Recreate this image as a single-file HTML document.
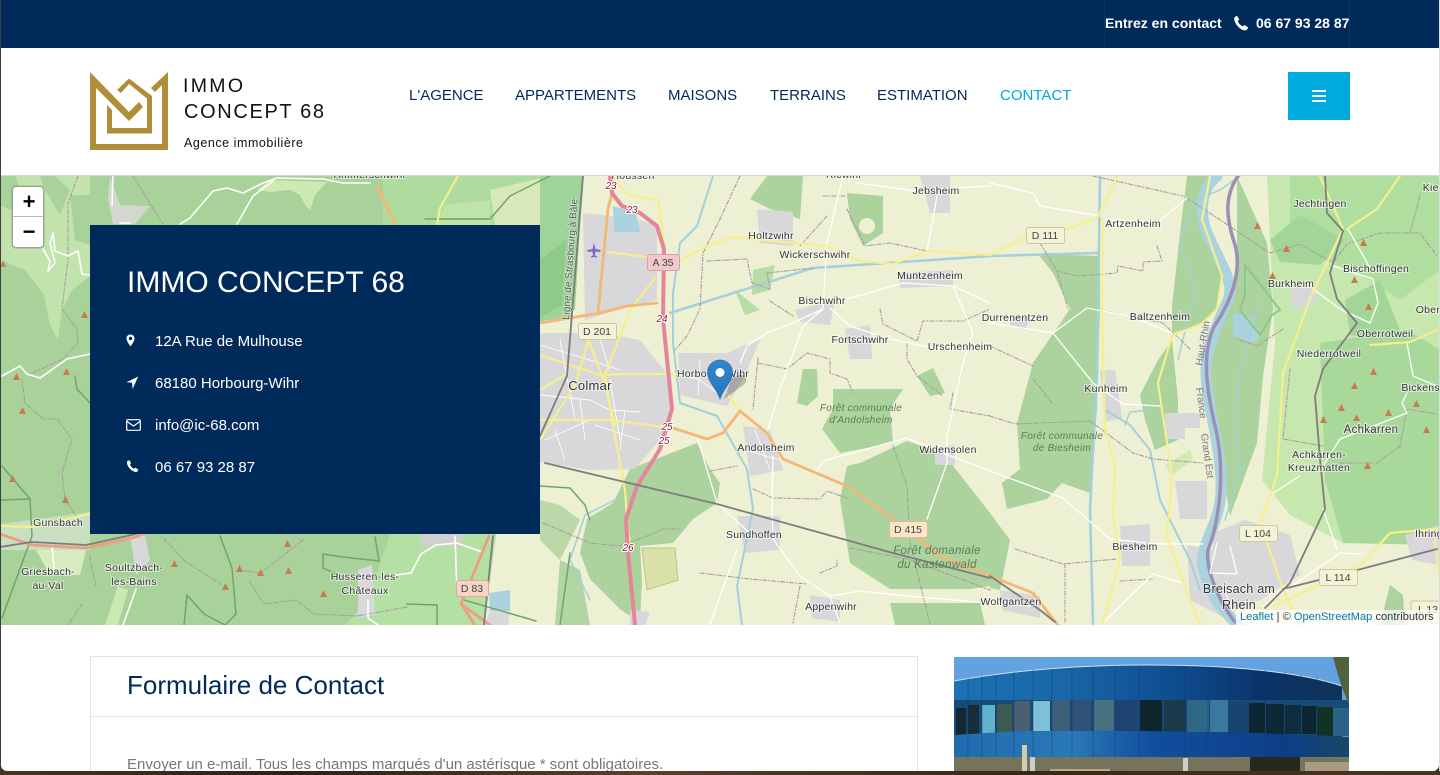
<!DOCTYPE html>
<html lang="fr"><head><meta charset="utf-8"><title>Contact</title>
<style>
html,body{margin:0;padding:0}
body{width:1440px;height:775px;overflow:hidden;position:relative;background:#3b2a1a;font-family:"Liberation Sans",Arial,sans-serif}
#page{position:absolute;left:1px;top:0;width:1438px;height:771px;background:#fff;border-radius:0 0 6px 6px;overflow:hidden}
.a{position:absolute;white-space:nowrap}
#left{position:absolute;left:0;top:0;width:1px;height:771px;background:#3a3f44}
#right{position:absolute;right:0;top:0;width:1px;height:771px;background:#d8dde0}
#bot{position:absolute;left:0;top:771px;width:1440px;height:4px;background:linear-gradient(90deg,#4a3420,#2e2014 20%,#5a4026 45%,#3a2818 70%,#4b3520)}
.nav{top:87px;font-size:15px;line-height:18px;color:#002a5a}
.det{font-size:15px;line-height:18px;color:#fff}
svg text{font-family:"Liberation Sans",sans-serif}
.l{font-size:10.5px;letter-spacing:.25px;fill:#333;text-anchor:middle;stroke:rgba(255,255,255,.6);stroke-width:2px;paint-order:stroke}
.f{font-size:10px;font-style:italic;letter-spacing:.3px;fill:#5c7d56;text-anchor:middle}
.s{font-size:10.5px;fill:#444;text-anchor:middle}
.r{font-size:10px;font-style:italic;fill:#8c1f3a;text-anchor:middle;stroke:#fff;stroke-width:2px;paint-order:stroke}
</style></head><body>
<div id="left"></div><div id="right"></div><div id="bot"></div>
<div id="page">
<div class="a" style="left:0;top:0;width:1438px;height:48px;background:#002a5a"></div>
<div class="a" style="left:1103px;top:0;width:1px;height:48px;background:#0a3566"></div>
<div class="a" style="left:1348px;top:0;width:1px;height:48px;background:#0a3566"></div>
<div class="a" style="left:1104px;top:15px;font-size:14px;line-height:17px;font-weight:bold;color:#fff">Entrez en contact</div>
<svg class="a" style="left:1232px;top:15px" width="16" height="16" viewBox="0 0 16 16"><path d="M1.500 2.200 4 .8 6.300 4.600 4.900 6C5.300 8 7.600 10.600 10 11.300L11.600 10 15.200 12.500 13.800 15C12.500 15.800 10 15.500 7.400 13.600 3.500 10.800 .2 5.600 1.500 2.200Z" fill="#fff"/></svg>
<div class="a" style="left:1255px;top:15px;font-size:14px;line-height:17px;font-weight:bold;color:#fff">06 67 93 28 87</div>
<svg class="a" style="left:-1px;top:48px" width="340" height="127" viewBox="0 48 340 127">
<path d="M90 72V150H168V72L151 88 155 92 162 85V144H96V88L129 121 143 107 139 102 129 112Z" fill="#b08d36"/>
<path d="M117 90 129 78.500 152 96V133.500H107V105L112 110V128H147V98.500L129 84 121 93Z" fill="#b08d36"/>
<text x="183" y="92" font-size="19.500" textLength="60" lengthAdjust="spacing" fill="#111">IMMO</text>
<text x="184" y="118" font-size="20" textLength="140" lengthAdjust="spacing" fill="#111">CONCEPT 68</text>
<text x="184" y="147" font-size="12.500" textLength="119" lengthAdjust="spacing" fill="#111">Agence immobilière</text>
</svg>
<div class="a nav" style="left:408px">L'AGENCE</div>
<div class="a nav" style="left:514px">APPARTEMENTS</div>
<div class="a nav" style="left:667px">MAISONS</div>
<div class="a nav" style="left:769px">TERRAINS</div>
<div class="a nav" style="left:876px">ESTIMATION</div>
<div class="a nav" style="left:999px;color:#00a9de">CONTACT</div>
<div class="a" style="left:1287px;top:72px;width:62px;height:48px;background:#00a9de"></div>
<div class="a" style="left:1311px;top:90px;width:14px;height:2px;background:#fff"></div>
<div class="a" style="left:1311px;top:95px;width:14px;height:2px;background:#fff"></div>
<div class="a" style="left:1311px;top:100px;width:14px;height:2px;background:#fff"></div>

<svg class="a" style="left:-1px;top:175px" width="1440" height="450" viewBox="0 175 1440 450">
<rect x="0" y="175" width="1440" height="450" fill="#eef0d3"/>
<!-- West base -->
<path d="M0 175H583L572 320H540V534H496L484 625H0Z" fill="#a8d29a"/>
<path d="M0 176H90V276L72 290 62 310 58 340 50 325 44 295 25 270 5 262 0 270Z" fill="#c2e3ab"/>
<path d="M40 176H55L70 190 60 215 45 190ZM0 176H15L25 200 10 210 0 205ZM70 195H90V245L75 240ZM90 176H108V225H95Z" fill="#a8d29a"/>
<path d="M110 176 120 205 150 206 135 224H113L108 200Z" fill="#d4d7cf"/>
<path d="M383 176H540V225H383Z" fill="#aedc9e"/>
<path d="M257 190 270 180 327 182 315 195 310 210 305 205 300 195 290 190 270 192Z" fill="#cfeab0"/>
<path d="M490 190 550 176V225H495Z" fill="#d8e8b8"/>
<path d="M445 205 490 200 490 225H435Z" fill="#c0e4a8"/>
<path d="M0 524 90 512V550H0Z" fill="#c8dfc0"/>
<path d="M36 550H86L80 575 50 575Z" fill="#d8ecc0"/>
<path d="M118 586 128 590 118 625H105Z" fill="#cbe8b0"/>
<path d="M390 534H496L484 625H345L368 600Z" fill="#b4e0a3"/>
<path d="M421 534H464L460 546 421 546Z" fill="#d0d0d0"/>
<path d="M540 176H583L575 310 540 322Z" fill="#9ed498"/>
<path d="M540 260 566 240 562 305 540 318Z" fill="#8ecb88"/>
<!-- East -->
<path d="M1267 176H1440V545L1343 543 1290 515 1262 480 1275 343Z" fill="#c6e8ae"/>
<path d="M1320 343 1407 330 1440 350V545L1343 543 1325 480Z" fill="#a8d89a"/>
<path d="M1290 176H1440V270L1400 300 1370 280 1330 262 1290 245Z" fill="#b0de9f"/>
<path d="M1270 240 1300 215 1345 240 1320 265 1280 262ZM1380 280 1400 330 1380 340 1350 335 1345 300Z" fill="#a4d598"/>
<path d="M1380 625 1390 585 1403 595 1405 625Z" fill="#acd29d"/>
<!-- Rhine forest -->
<path d="M1172 306 1180 233 1187 176H1210L1203 226 1222 273 1217 309 1197 326 1172 333Z" fill="#acd29d"/>
<path d="M1237 176 1267 243 1273 309 1263 376 1257 443 1230 516 1222 466 1207 393 1210 339 1237 276 1237 236Z" fill="#acd29d"/>
<path d="M1140 395 1158 360 1172 340 1178 400 1178 440 1155 450 1145 420Z" fill="#acd29d"/>
<!-- Central forests -->
<g fill="#acd29d">
<path d="M750 199 767 176H803L800 219 770 209Z"/>
<path d="M847 193 883 196 883 233 863 246 850 219Z"/>
<path d="M797 403 803 369 817 369 818 396 807 406Z"/>
<path d="M917 376 933 368 945 393 930 396Z"/>
<path d="M833 389 903 389 890 409 893 443 840 453 822 429 833 409Z"/>
<path d="M860 463 907 441 943 453 990 513V586L970 589 957 589 890 589 850 563 840 499 847 466Z"/>
<path d="M890 603 980 603 985 625H895Z"/>
<path d="M990 513 1010 540 1000 590 990 588Z"/>
<path d="M1038 254 1100 256 1100 309 1097 409 1090 493 1062 483 1047 499 1007 509 1002 483 1020 469 1017 423 1033 363 1070 309 1053 273Z"/>
<path d="M630 469 697 443 710 469 720 483 717 503 693 519 673 543 640 546 642 579 640 623 620 609 590 579 580 553 587 519 613 503Z"/>
<path d="M540 500 560 505 580 520 560 560 540 540Z" opacity=".8"/>
<path d="M560 560 580 570 590 625H555Z" opacity=".9"/>
</g>
<circle cx="867" cy="226" r="8" fill="#eef0d3"/>
<path d="M642 548 675 548 678 580 647 590Z" fill="#d9e0a8" stroke="#bcc58a"/>
<path d="M1165 465 1190 450 1193 460 1172 475Z" fill="#d0eab0"/>
<path d="M753 270 775 265 770 290 752 295ZM735 290 760 310 745 315Z" fill="#b8dca6"/>
<!-- Urban -->
<g fill="#d8d7d9">
<path d="M583 213 635 218 657 226 657 300 610 312 585 320Z"/>
<path d="M540 333H600L640 340 672 380 668 430 635 469 590 470 540 462Z"/>
<path d="M678 353 727 353 745 345 760 340 745 375 727 406 680 395Z"/>
<path d="M743 426 770 430 783 470 750 476Z"/>
<path d="M737 516 780 516 780 550 745 553Z"/>
<path d="M757 209 793 212 793 246 760 243Z"/>
<path d="M845 329 870 325 872 359 850 359Z"/>
<path d="M898 273 953 270 953 286 900 288Z"/>
<path d="M920 176 950 176 950 213 930 213Z"/>
<path d="M795 310 835 300 830 325 800 322Z"/>
<path d="M935 450 955 445 955 465 935 465Z"/>
<path d="M1120 526 1150 524 1150 566 1122 566Z"/>
<path d="M1100 370 1115 370 1122 418 1105 422Z"/>
<path d="M1213 533 1245 520 1290 535 1300 575 1260 600 1235 610 1213 570Z"/>
<path d="M1165 413H1200V428H1185V439H1165Z"/>
<path d="M1175 481H1207V519H1180Z"/>
<path d="M1290 285 1320 288 1315 305 1292 308Z"/>
<path d="M1405 535 1440 525V565L1412 560Z"/>
<path d="M1187 545 1215 550 1232 622 1190 600Z"/>
<path d="M1000 590 1040 596 1040 618 1002 610Z"/>
<path d="M1010 315 1030 318 1025 330 1010 325Z"/>
<path d="M810 595 840 600 840 622 812 618Z"/>
<path d="M490 611 510 612 508 625 484 625Z"/>
<path d="M358 570 372 565 375 615 358 618Z"/>
<path d="M130 535 145 535 150 560 136 575Z"/>
<path d="M630 610 650 612 645 625 630 625Z"/>
</g>
<g fill="none" stroke-linecap="round" stroke-linejoin="round">
<!-- Water -->
<path d="M1217 176C1200 190 1198 215 1210 240S1235 285 1228 300C1215 330 1205 350 1206 375 1208 410 1222 450 1221 490S1195 545 1205 575 1225 610 1237 625" stroke="#aad3df" stroke-width="11"/>
<path d="M613 206 636 213 640 232H614Z" fill="#aad3df" stroke="none"/>
<path d="M1233 313 1250 316 1260 335 1255 343 1233 336Z" fill="#aad3df" stroke="none"/>
<path d="M489 593 510 590 510 611 490 611Z" fill="#aad3df" stroke="none"/>
<path d="M1100 176 1097 376 1090 509 1093 624" stroke="#a4cfdc" stroke-width="2.500"/>
<path d="M670 313 813 268 873 264 990 256 1098 253" stroke="#a4cfdc" stroke-width="2.500"/>
<path d="M713 176 697 226 680 243 673 293 673 343 680 403 717 416 747 469 753 509 737 586 742 625" stroke="#a4cfdc" stroke-width="2"/>
<path d="M1240 176 1220 190 1195 200 1180 240 1195 290 1178 360M1260 300 1240 370 1235 420 1240 470 1225 520" stroke="#a4cfdc" stroke-width="1.500"/>
<path d="M1105 410 1130 425 1150 450 1160 500 1190 560 1200 590" stroke="#a4cfdc" stroke-width="2"/>
<path d="M1125 425 1130 412 1150 410" stroke="#a4cfdc" stroke-width="1.500"/>
<path d="M590 600 570 560 585 515 615 500" stroke="#a4cfdc" stroke-width="1.500"/>
<!-- Boundary -->
<path d="M1238 176C1225 195 1225 215 1235 245 1242 270 1232 300 1215 325 1202 350 1205 385 1216 430 1225 470 1220 520 1208 550 1205 575 1225 610 1235 622" stroke="#9c8fb4" stroke-width="3.500"/>
<path d="M1245 265 1280 310 1272 315 1260 335 1240 310 1245 295Z" stroke="#8cc78c" stroke-width="2"/>
<g stroke="#a89ca2" stroke-width="1.100" stroke-dasharray="4 2 1 2">
<path d="M78 176 68 203 68 259 62 309 77 329 78 343 63 359 30 374M22 379 25 403 43 419 57 419 72 439 62 473 65 499 80 523"/>
<path d="M133 176 163 224M164 539 186 562 221 584M239 570 261 573 304 539M250 582 264 604 296 600 314 614 357 616 407 607M82 604 68 625M96 586 89 554"/>
<path d="M740 176 720 219 703 253 700 309 687 336 675 350M707 261 747 259 752 283 770 289 767 273 813 268M770 301 793 316M823 196 847 196M827 216 800 246M847 209 865 246 890 243 927 251"/>
<path d="M880 309 883 324 917 341 923 321 963 321 990 309M907 343 907 359 917 376 943 396M758 358 753 409M758 363 787 369 807 353 830 359 830 373 847 379 853 393M953 393 950 409 990 416"/>
<path d="M710 471 737 466M753 489 773 498 820 499 827 491 847 498M893 446 907 486 910 543 930 624M850 548 907 559 990 590M820 573 837 566 837 560M800 586 793 623M700 573 750 579 807 584M543 523 590 543 620 546 647 536 663 529 680 529"/>
<path d="M1093 176 1183 196M1157 246 1162 261 1143 262 1143 271 1118 266 1117 273 1077 276 1057 271M1040 243 1057 271 1068 309M1090 308 1130 316 1163 323 1190 349M1033 379 1052 403M990 416 1015 424 1090 421 1133 453 1153 459 1203 463M990 346 1033 366M1015 549 1063 564 1117 559M1065 564 1065 623M1120 581 1153 579M1183 544 1203 544"/>
<path d="M1187 198 1270 253 1300 244 1333 263 1347 244 1380 233 1420 233 1437 256M1420 196 1410 233M1283 329 1257 346 1237 339M1290 369 1283 439 1323 446M1340 463 1377 463 1400 446 1407 409 1437 414"/>
</g>
<!-- Green boundaries -->
<path d="M75 376 77 389 90 403M2 466 30 499 32 536M32 536 2 618M220 536 232 568 236 614 225 625M204 614 187 595 184 625M204 614 225 625M375 537 379 561 343 557 323 554 323 568 343 577M407 604 437 605 437 625M464 600 536 621M425 219 490 219 510 196 550 176M0 500 30 499M540 486 570 488 585 505 590 520M560 625 570 553" stroke="#6fa56b" stroke-width="1.500"/>
<!-- White roads -->
<g stroke="#fff" stroke-width="1.600">
<path d="M43 249 50 261 48 271 55 263 50 243 53 233 55 251 68 256 78 251 82 274 90 275M2 376 20 366 27 374 40 378 67 359 90 354"/>
<path d="M180 224 190 218 213 191 227 188 243 193 263 183 277 178 323 179 343 183 370 183M237 224 253 196 273 181M113 176 112 205M120 223 130 223"/>
<path d="M396 575 411 573 421 554 436 545 457 543 482 552M455 536 457 593M368 600 368 618 378 625M136 589 123 625M52 546 54 568"/>
</g>
<g stroke="#fff" stroke-width="1.300">
<path d="M843 176 827 243 823 309 803 326 780 389 767 433M857 183 917 191 937 189 990 186M937 196 927 251M823 309 797 321 767 333 747 346 740 363M830 308 850 326 890 339 933 348 990 344M840 301 903 283 953 286 973 333 963 363 947 436 947 463 927 519M953 286 990 303"/>
<path d="M817 471 823 461 907 438 943 453 990 471M773 456 772 509 773 539 800 576 830 596 860 591 907 596 990 603 1030 606M737 549 710 624M697 436 717 503 753 536M830 596 840 623"/>
<path d="M990 183 1033 193 1040 206 1100 216M1187 198 1157 223 1105 219M990 323 1053 333 1093 383 1123 404 1160 406M1053 333 1087 308 1130 316 1172 333M990 471 1063 498 1110 539 1157 544 1203 544M1103 623 1153 574 1183 583"/>
<path d="M1333 266 1373 279 1378 303 1370 323 1340 309 1313 289M1348 229 1373 273M1407 343 1413 376 1437 386M1407 393 1402 403 1407 413 1340 439 1323 466M1300 476 1273 493M1217 543 1210 573 1237 574 1230 546M1263 606 1340 553 1363 554M1337 549 1323 509"/>
</g>
<!-- Town streets -->
<g stroke="#fff" stroke-width=".9">
<path d="M540 345 590 360 620 370M540 395 590 400 610 410 640 412M580 400 585 440M610 380 620 440M560 340 575 420M600 340 610 370M545 440 590 420M625 410 620 450M595 425 640 440M555 430 565 460M680 375 700 380 720 395M700 360 698 395M755 430 770 470M745 450 780 460"/>
</g>
<!-- Yellow roads -->
<g stroke="#f5ef8e" stroke-width="2.200">
<path d="M612 176 628 195 658 200 665 250"/>
<path d="M608 252 680 261 707 246 733 237 773 241 827 246 860 261 893 264 927 251 990 255 1023 239 1067 229 1097 218 1113 186 1117 176"/>
<path d="M1103 219 1102 309 1105 429 1115 466 1113 516 1120 559 1103 623"/>
<path d="M1210 176 1202 219 1222 276 1217 309 1203 323 1172 336 1158 383 1172 476 1167 536 1187 593 1200 624"/>
<path d="M1320 176 1343 229 1310 299 1283 373 1277 476 1260 523 1283 589 1300 624"/>
<path d="M1400 176 1377 209 1347 229M1273 606 1323 583 1360 566 1390 533 1437 529M1440 580 1435 540M1437 330 1410 342 1370 345"/>
<path d="M540 355 600 375 620 374 680 374M655 278 630 310 605 375 612 420 625 490 628 530 630 545M540 440 575 385 590 335M540 390 565 375M585 330 605 385 615 425M540 420 610 420 672 428M727 393 740 411M0 526 32 527 89 514M458 176 440 208 437 224"/>
</g>
<!-- Orange roads -->
<g stroke="#f3b777" stroke-width="2.800">
<path d="M673 428 707 439 723 433 740 411 767 433 783 459 847 486 893 519 940 556 990 576 1033 593 1053 619 1058 625"/>
<path d="M540 323 600 313 627 306 657 303"/>
<path d="M598 313 608 209 612 193"/>
<path d="M377 186 395 224"/>
<path d="M0 534 32 545 86 548 136 537 143 534M489 536 461 604 475 625M461 604 490 625" stroke="#ee9e80"/>
</g>
<!-- Motorway -->
<path d="M610 176 612 193 622 206 640 213 657 226 664 249 663 319 672 409 660 449 637 486 626 519 628 553 635 625" stroke="#e5859a" stroke-width="4"/>
<!-- Rail -->
<g stroke="#7d7d7d" stroke-width="1.800">
<path d="M545 463 717 504 893 553 990 578"/>
<path d="M583 176 567 376 540 436"/>
<path d="M1325 176 1327 213 1343 231 1330 273 1337 299 1357 323 1323 369 1315 396 1320 459 1325 509 1290 583 1265 608M1283 589 1323 579 1437 549M990 576 1040 610 1055 622M0 547 32 542 86 545 136 534"/>
<path d="M493 536 484 625"/>
</g>
</g>
<!-- Triangles -->
<g fill="#c77b4e">
<path d="M1254 229h7l-3.500-7ZM1283 252h7l-3.500-7ZM1269 279h7l-3.500-7ZM1360 246h7l-3.500-7ZM1351 283h7l-3.500-7ZM1365 310h7l-3.500-7ZM1370 375h7l-3.500-7ZM1351 389h7l-3.500-7ZM1338 411h7l-3.500-7ZM1353 421h7l-3.500-7ZM1320 423h7l-3.500-7ZM1385 416h7l-3.500-7ZM1413 407h7l-3.500-7ZM1423 433h7l-3.500-7ZM1364 469h7l-3.500-7Z"/>
<path d="M0 267h6l-3-7ZM81 318h7l-3.500-7ZM13 380h7l-3.500-7ZM63 375h7l-3.500-7ZM19 414h7l-3.500-7ZM9 482h7l-3.500-7ZM62 503h7l-3.500-7ZM171 567h7l-3.500-7ZM236 572h7l-3.500-7ZM257 576h7l-3.500-7ZM285 574h7l-3.500-7ZM222 590h7l-3.500-7ZM320 597h7l-3.500-7ZM284 547h7l-3.500-7Z"/>
</g>
<path d="M594 243l1.500 6 5 1 0 2-5-.5-.5 4 2 1v1l-3-.5-3 .5v-1l2-1-.5-4-5 .5v-2l5-1Z" fill="#7b68c8"/>
<!-- Road shields -->
<g stroke-width="1">
<rect x="647.500" y="254.500" width="32" height="16" rx="2" fill="#f3c8cd" stroke="#d9a2a9"/>
<rect x="578.500" y="323.500" width="38" height="16" rx="2" fill="#f3f3d8" stroke="#ccc99c"/>
<rect x="889.500" y="521.500" width="38" height="16" rx="2" fill="#fbe5c8" stroke="#d9bd94"/>
<rect x="1026.500" y="227.500" width="38" height="16" rx="2" fill="#f3f3d8" stroke="#ccc99c"/>
<rect x="1239.500" y="525.500" width="38" height="16" rx="2" fill="#f3f3d8" stroke="#ccc99c"/>
<rect x="1319.500" y="569.500" width="38" height="16" rx="2" fill="#f3f3d8" stroke="#ccc99c"/>
<rect x="456.500" y="580.500" width="32" height="16" rx="2" fill="#f8d3c8" stroke="#e0a899"/>
<rect x="1411" y="601" width="30" height="16" rx="2" fill="#f3f3d8" stroke="#ccc99c"/>
</g>
<text class="s" x="663" y="266">A 35</text><text class="s" x="597" y="335">D 201</text><text class="s" x="908" y="533">D 415</text><text class="s" x="1045" y="239">D 111</text><text class="s" x="1258" y="537">L 104</text><text class="s" x="1338" y="581">L 114</text><text class="s" x="472" y="592">D 83</text><text class="s" x="1428" y="613">L 13</text>
<text class="r" x="611" y="189">23</text><text class="r" x="632" y="213">23</text><text class="r" x="662" y="322">24</text><text class="r" x="667" y="430">25</text><text class="r" x="664" y="444">25</text><text class="r" x="628" y="551">26</text>
<!-- Labels -->
<text class="l" x="370" y="178">Ammerschwihr</text><text class="l" x="633" y="179">Houssen</text><text class="l" x="844" y="178">Ricwihr</text><text class="l" x="936" y="194">Jebsheim</text><text class="l" x="771" y="239">Holtzwihr</text><text class="l" x="815" y="258">Wickerschwihr</text><text class="l" x="930" y="279">Muntzenheim</text><text class="l" x="1133" y="227">Artzenheim</text><text class="l" x="1320" y="207">Jechtingen</text><text class="l" x="1376" y="272">Bischoffingen</text><text class="l" x="1291" y="287">Burkheim</text><text class="l" x="822" y="304">Bischwihr</text><text class="l" x="860" y="343">Fortschwihr</text><text class="l" x="960" y="350">Urschenheim</text><text class="l" x="1015" y="321">Durrenentzen</text><text class="l" x="1160" y="320">Baltzenheim</text><text class="l" x="1385" y="337">Oberrotweil</text><text class="l" x="1329" y="357">Niederrotweil</text><text class="l" x="1106" y="392">Kunheim</text><text class="l" x="1428" y="391">Bickensohl</text><text class="l" x="1445" y="313">Oberbergen</text><text class="l" x="1371" y="433" style="font-size:11.500px">Achkarren</text><text class="l" x="1319" y="458">Achkarren-</text><text class="l" x="1319" y="471">Kreuzmatten</text><text class="l" x="713" y="377">Horbourg-Wihr</text><text class="l" x="590" y="390" style="font-size:13px">Colmar</text><text class="l" x="766" y="451">Andolsheim</text><text class="l" x="948" y="453">Widensolen</text><text class="l" x="754" y="538">Sundhoffen</text><text class="l" x="1135" y="550">Biesheim</text><text class="l" x="831" y="610">Appenwihr</text><text class="l" x="1011" y="605">Wolfgantzen</text><text class="l" x="1239" y="593" style="font-size:12.500px">Breisach am</text><text class="l" x="1239" y="609" style="font-size:12.500px">Rhein</text><text class="l" x="1435" y="537">Ihringen</text><text class="l" x="1462" y="191">Kiechlinsbergen</text><text class="l" x="58" y="526">Gunsbach</text><text class="l" x="48" y="575">Griesbach-</text><text class="l" x="48" y="589">au-Val</text><text class="l" x="134" y="571">Soultzbach-</text><text class="l" x="134" y="585">les-Bains</text><text class="l" x="365" y="580">Husseren-les-</text><text class="l" x="365" y="594">Châteaux</text>
<text class="f" x="861" y="411">Forêt communale</text><text class="f" x="861" y="423">d'Andolsheim</text><text class="f" x="1062" y="439">Forêt communale</text><text class="f" x="1062" y="451">de Biesheim</text><text class="f" x="937" y="554" style="font-size:11.500px">Forêt domaniale</text><text class="f" x="937" y="568" style="font-size:11.500px">du Kastenwald</text>
<text x="0" y="0" transform="translate(1202 366) rotate(-80)" style="font-size:10px;fill:#77758a">Haut-Rhin</text>
<text x="0" y="0" transform="translate(1196 388) rotate(82)" style="font-size:10px;fill:#77758a">France</text>
<text x="0" y="0" transform="translate(1201 434) rotate(82)" style="font-size:10px;fill:#77758a">Grand Est</text>
<text x="0" y="0" transform="translate(569 320) rotate(-86)" style="font-size:10px;fill:#555;stroke:rgba(255,255,255,.5);stroke-width:1.500px;paint-order:stroke">Ligne de Strasbourg à Bâle</text>
<!-- Marker -->
<path d="M724 399 742 386C748 382 748 375 740 375L732 378Z" fill="#000" opacity=".22"/>
<defs><linearGradient id="mg" x1="0" y1="0" x2="0" y2="1"><stop offset="0" stop-color="#2e86cc"/><stop offset="1" stop-color="#2a78b5"/></linearGradient></defs>
<path d="M720 399C716 387 707.500 382 707.500 372.500A12.500 12.500 0 0 1 732.500 372.500C732.500 382 724 387 720 399Z" fill="url(#mg)" stroke="#2a72ab" stroke-width=".7"/>
<circle cx="720" cy="372.500" r="4.500" fill="#fff"/>
</svg>
<div class="a" style="left:-1px;top:175px;width:1440px;height:1px;background:#d6d9cf"></div>
<!-- Zoom -->
<div class="a" style="left:11px;top:186px;width:30px;height:60px;background:#fff;border:1px solid #9aa49a;border-radius:4px;box-shadow:0 0 0 1px rgba(0,0,0,.1)"></div>
<div class="a" style="left:12px;top:216px;width:30px;height:1px;background:#bbb"></div>
<div class="a" style="left:13px;top:188px;width:30px;text-align:center;font-size:22px;line-height:28px;font-weight:bold;color:#000">+</div>
<div class="a" style="left:13px;top:218px;width:30px;text-align:center;font-size:22px;line-height:28px;font-weight:bold;color:#000">−</div>
<!-- Attribution -->
<div class="a" style="left:1235px;top:610px;width:203px;height:15px;background:rgba(255,255,255,.75);font-size:11px;line-height:15px;color:#333;text-indent:4px;letter-spacing:.06px">
<span style="color:#0078a8">Leaflet</span> | © <span style="color:#0078a8">OpenStreetMap</span> contributors</div>
<!-- Panel -->
<div class="a" style="left:89px;top:225px;width:450px;height:309px;background:#002a5a"></div>
<div class="a" style="left:126px;top:265px;font-size:30px;line-height:36px;color:#fff">IMMO CONCEPT 68</div>
<div class="a det" style="left:154px;top:333px">12A Rue de Mulhouse</div>
<div class="a det" style="left:154px;top:375px">68180 Horbourg-Wihr</div>
<div class="a det" style="left:154px;top:417px">info@ic-68.com</div>
<div class="a det" style="left:154px;top:459px">06 67 93 28 87</div>
<svg class="a" style="left:124px;top:333px" width="14" height="16" viewBox="0 0 14 16"><path fill-rule="evenodd" d="M5.500 1.500C3 1.500 1.500 3.300 1.500 5.500 1.500 8 4.200 11.500 5.500 13.500 6.800 11.500 9.500 8 9.500 5.500 9.500 3.300 8 1.500 5.500 1.500ZM5.500 3.800a1.700 1.700 0 1 1 0 3.400 1.700 1.700 0 0 1 0-3.400Z" fill="#fff"/></svg>
<svg class="a" style="left:125px;top:376px" width="14" height="14" viewBox="0 0 14 14"><path d="M12.200 .5 .5 6.300 6 6.600 6.600 13Z" fill="#fff"/></svg>
<svg class="a" style="left:125px;top:418px" width="16" height="14" viewBox="0 0 16 14"><rect x=".7" y="1.700" width="13.600" height="10.600" rx="1.200" fill="none" stroke="#fff" stroke-width="1.200"/><path d="M1 3.500 7.500 8 14 3.500" fill="none" stroke="#fff" stroke-width="1.200"/></svg>
<svg class="a" style="left:125px;top:459px" width="13" height="14" viewBox="0 0 16 16"><path d="M1.500 2.200 4 .8 6.300 4.600 4.900 6C5.300 8 7.600 10.600 10 11.300L11.600 10 15.200 12.500 13.800 15C12.500 15.800 10 15.500 7.400 13.600 3.500 10.800 .2 5.600 1.500 2.200Z" fill="#fff"/></svg>
<!-- Form -->
<div class="a" style="left:89px;top:656px;width:826px;height:130px;border:1px solid #e2e2e2"></div>
<div class="a" style="left:90px;top:716px;width:826px;height:1px;background:#e6e6e6"></div>
<div class="a" style="left:126px;top:670px;font-size:26px;line-height:30px;color:#002a5a">Formulaire de Contact</div>
<div class="a" style="left:126px;top:756px;font-size:15px;line-height:18px;color:#777">Envoyer un e-mail. Tous les champs marqués d'un astérisque * sont obligatoires.</div>
<!-- Photo -->
<svg class="a" style="left:953px;top:657px" width="395" height="114" viewBox="954 657 395 114">
<defs><linearGradient id="bl" x1="0" x2="1" y1="0" y2="0"><stop offset="0" stop-color="#1c72b4"/><stop offset=".25" stop-color="#1a68aa"/><stop offset=".55" stop-color="#0f4f92"/><stop offset=".8" stop-color="#0a3268"/><stop offset="1" stop-color="#0f3458"/></linearGradient>
<linearGradient id="bm" x1="0" x2="1" y1="0" y2="0"><stop offset="0" stop-color="#1f6db0"/><stop offset=".3" stop-color="#2a78b8"/><stop offset=".5" stop-color="#114f9e"/><stop offset=".85" stop-color="#0d3e86"/><stop offset="1" stop-color="#174866"/></linearGradient></defs>
<rect x="954" y="657" width="395" height="114" fill="#63a2e0"/>
<path d="M954 681C1020 669 1090 665 1150 665 1230 665 1300 672 1342 686V771H954Z" fill="url(#bl)"/>
<path d="M954 681C1020 669 1090 665 1150 665 1230 665 1300 672 1342 686" fill="none" stroke="#cfe0ee" stroke-width="1"/>
<g>
<rect x="954" y="700" width="395" height="35" fill="#1a4a78"/>
<rect x="956" y="708" width="10" height="27" fill="#142834"/><rect x="968" y="705" width="11" height="30" fill="#182e36"/><rect x="982" y="705" width="13" height="29" fill="#5fb4cc"/><rect x="997" y="704" width="15" height="29" fill="#3d5a50"/>
<rect x="1014" y="701" width="16" height="30" fill="#4a5f70"/><rect x="1033" y="701" width="17" height="30" fill="#7fbfda"/><rect x="1052" y="700" width="18" height="31" fill="#3f5f78"/><rect x="1072" y="700" width="19" height="31" fill="#2e5278"/><rect x="1094" y="700" width="20" height="31" fill="#46707f"/><rect x="1116" y="700" width="21" height="31" fill="#1e4272"/>
<rect x="1140" y="700" width="22" height="32" fill="#10242e"/><rect x="1164" y="700" width="22" height="32" fill="#1a3a4c"/><rect x="1187" y="700" width="22" height="32" fill="#2f6788"/><rect x="1210" y="700" width="18" height="32" fill="#3a789e"/><rect x="1229" y="702" width="18" height="31" fill="#174470"/><rect x="1249" y="703" width="16" height="30" fill="#0c2530"/><rect x="1266" y="704" width="18" height="30" fill="#0d2836"/><rect x="1285" y="705" width="16" height="29" fill="#0f2c40"/><rect x="1302" y="706" width="14" height="28" fill="#0c2530"/><rect x="1317" y="707" width="16" height="28" fill="#123224"/><rect x="1333" y="708" width="16" height="28" fill="#2a6288"/>
</g>
<path d="M954 735 1020 731H1140L1260 733 1349 737V763L1260 757H954Z" fill="url(#bm)"/>
<g stroke="#0c3a66" stroke-width="1" opacity=".4" fill="none"><path d="M1014 672V757M1033 670V757M1052 669V757M1072 668V757M1093 667V757M1115 667V757M1139 666V757M1162 666V757M1185 666V757M1208 667V757M1229 668V757M1248 669V757M1265 670V757M1285 672V757M1301 674V757M1317 677V757M982 676V757M996 675V757M968 678V757"/></g>
<rect x="954" y="757" width="395" height="14" fill="#76735c"/>
<rect x="1050" y="769" width="60" height="2" fill="#b7ad87"/>
<rect x="1183" y="758" width="5" height="13" fill="#c9cfcf"/><rect x="1030" y="757" width="5" height="14" fill="#c9cfcf"/>
<rect x="1022" y="745" width="5" height="26" fill="#d4ccaa"/>
<rect x="1250" y="757" width="50" height="14" fill="#25291f"/><rect x="1305" y="762" width="44" height="9" fill="#a89c80"/>
<path d="M1333 657H1349V705L1343 690 1338 675Z" fill="#51613e"/>
</svg>
</div>
</body></html>
